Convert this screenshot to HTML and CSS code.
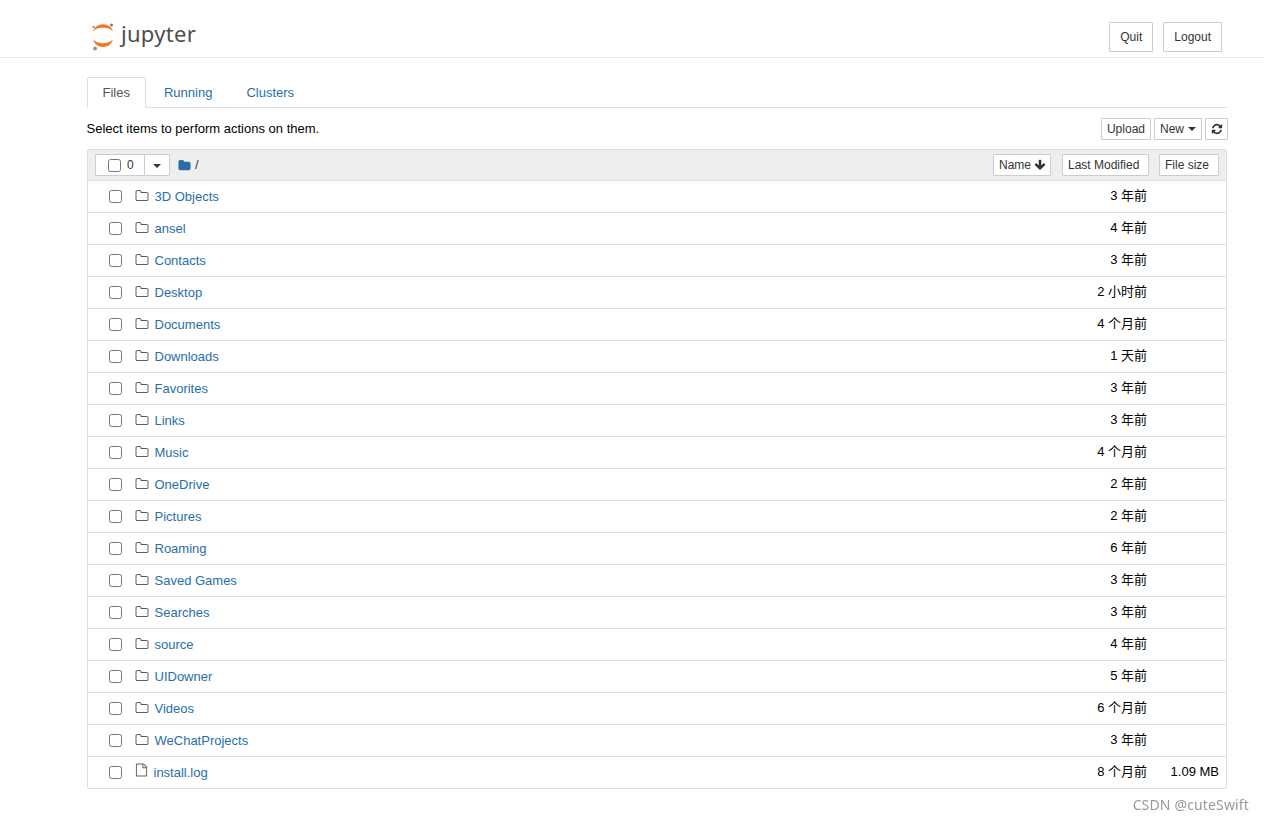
FILE: index.html
```
<!DOCTYPE html>
<html lang="en">
<head>
  <meta charset="UTF-8" />
  <meta name="viewport" content="width=device-width, initial-scale=1" />
  <title>Home Page - Select or create a notebook</title>
  <link rel="stylesheet" href="styles.css">
</head>
<body>
  <!-- icon set -->
  <svg class="sprite" aria-hidden="true">
    <symbol id="folder-o" viewBox="0 0 1792 1792"><path d="M1600 1312v-704q0-40-28-68t-68-28h-704q-40 0-68-28t-28-68v-64q0-40-28-68t-68-28h-320q-40 0-68 28t-28 68v960q0 40 28 68t68 28h1216q40 0 68-28t28-68zm128-704v704q0 92-66 158t-158 66h-1216q-92 0-158-66t-66-158v-960q0-92 66-158t158-66h320q92 0 158 66t66 158v32h672q92 0 158 66t66 158z"/></symbol>
    <symbol id="folder" viewBox="0 0 1792 1792"><path d="M1728 608v704q0 92-66 158t-158 66h-1216q-92 0-158-66t-66-158v-960q0-92 66-158t158-66h320q92 0 158 66t66 158v32h672q92 0 158 66t66 158z"/></symbol>
    <symbol id="file-o" viewBox="0 0 1792 1792"><path d="M1596 380q28 28 48 76t20 88v1152q0 40-28 68t-68 28h-1344q-40 0-68-28t-28-68v-1600q0-40 28-68t68-28h896q40 0 88 20t76 48zm-444-244v376h376q-10-29-22-41l-313-313q-12-12-41-22zm384 1528v-1024h-416q-40 0-68-28t-28-68v-416h-768v1536h1280z"/></symbol>
    <symbol id="arrow-down" viewBox="0 0 1792 1792"><path d="M1675 832q0 53-37 90l-651 652q-39 37-91 37-53 0-90-37l-651-652q-38-36-38-90 0-53 38-91l74-75q39-37 91-37 53 0 90 37l294 294v-704q0-52 38-90t90-38h128q52 0 90 38t38 90v704l294-294q37-37 90-37 52 0 91 37l75 75q37 39 37 91z"/></symbol>
    <symbol id="refresh" viewBox="0 0 1792 1792"><path d="M1639 1056q0 5-1 7-64 268-268 434.500t-478 166.500q-146 0-282.500-55t-243.500-157l-129 129q-19 19-45 19t-45-19-19-45v-448q0-26 19-45t45-19h448q26 0 45 19t19 45-19 45l-137 137q71 66 161 102t187 36q134 0 250-65t186-179q11-17 53-117 8-23 30-23h192q13 0 22.500 9.500t9.500 22.500zm25-800v448q0 26-19 45t-45 19h-448q-26 0-45-19t-19-45 19-45l138-138q-148-137-349-137-134 0-250 65t-186 179q-11 17-53 117-8 23-30 23h-199q-13 0-22.500-9.500t-9.500-22.500v-7q65-268 270-434.500t480-166.500q146 0 284 55.500t245 156.500l130-129q19-19 45-19t45 19 19 45z"/></symbol>
  </svg>

  <header class="header">
    <a class="logo" href="#">
      <svg class="logo-mark" width="24" height="30" viewBox="0 0 24 30">
        <path d="M1.900 9.200Q4.500 2.200 12 2.200T22.100 9.200Q18.200 5.800 12 5.800T1.900 9.200z" fill="#f37726"/>
        <path d="M1.900 17.600Q5.800 21.200 12 21.200T22.100 17.600Q19.500 25 12 25T1.900 17.600z" fill="#f37726"/>
        <circle cx="20.500" cy="3" r="1.500" fill="#767677"/>
        <circle cx="2.600" cy="5" r="1.100" fill="#767677"/>
        <circle cx="4" cy="26.500" r="2" fill="#989798"/>
      </svg>
      <span class="logo-text">jupyter</span>
    </a>
    <div class="header-buttons">
      <button class="btn">Quit</button>
      <button class="btn">Logout</button>
    </div>
  </header>

  <main class="container">
    <nav class="tabs">
      <a class="tab active" href="#">Files</a>
      <a class="tab" href="#">Running</a>
      <a class="tab" href="#">Clusters</a>
    </nav>

    <div class="toolbar">
      <span>Select items to perform actions on them.</span>
      <div class="toolbar-buttons">
        <button class="btn btn-xs">Upload</button>
        <button class="btn btn-xs">New <i class="caret"></i></button>
        <button class="btn btn-xs btn-refresh" title="Refresh"><svg class="icon"><use href="#refresh"/></svg></button>
      </div>
    </div>

    <div class="list">
      <div class="list-header">
        <div class="select-group">
          <label class="btn select-all"><input type="checkbox"><span>0</span></label>
          <button class="btn select-menu"><i class="caret"></i></button>
        </div>
        <div class="breadcrumb"><a href="#"><svg class="icon"><use href="#folder"/></svg></a><span>/</span></div>
        <button class="btn btn-xs sort-name">Name <svg class="icon"><use href="#arrow-down"/></svg></button>
        <button class="btn btn-xs sort-modified">Last Modified</button>
        <button class="btn btn-xs sort-size">File size</button>
      </div>
      <div class="row"><input type="checkbox"><svg class="icon"><use href="#folder-o"/></svg><a href="#">3D Objects</a><span class="modified">3 年前</span><span class="size"></span></div>
      <div class="row"><input type="checkbox"><svg class="icon"><use href="#folder-o"/></svg><a href="#">ansel</a><span class="modified">4 年前</span><span class="size"></span></div>
      <div class="row"><input type="checkbox"><svg class="icon"><use href="#folder-o"/></svg><a href="#">Contacts</a><span class="modified">3 年前</span><span class="size"></span></div>
      <div class="row"><input type="checkbox"><svg class="icon"><use href="#folder-o"/></svg><a href="#">Desktop</a><span class="modified">2 小时前</span><span class="size"></span></div>
      <div class="row"><input type="checkbox"><svg class="icon"><use href="#folder-o"/></svg><a href="#">Documents</a><span class="modified">4 个月前</span><span class="size"></span></div>
      <div class="row"><input type="checkbox"><svg class="icon"><use href="#folder-o"/></svg><a href="#">Downloads</a><span class="modified">1 天前</span><span class="size"></span></div>
      <div class="row"><input type="checkbox"><svg class="icon"><use href="#folder-o"/></svg><a href="#">Favorites</a><span class="modified">3 年前</span><span class="size"></span></div>
      <div class="row"><input type="checkbox"><svg class="icon"><use href="#folder-o"/></svg><a href="#">Links</a><span class="modified">3 年前</span><span class="size"></span></div>
      <div class="row"><input type="checkbox"><svg class="icon"><use href="#folder-o"/></svg><a href="#">Music</a><span class="modified">4 个月前</span><span class="size"></span></div>
      <div class="row"><input type="checkbox"><svg class="icon"><use href="#folder-o"/></svg><a href="#">OneDrive</a><span class="modified">2 年前</span><span class="size"></span></div>
      <div class="row"><input type="checkbox"><svg class="icon"><use href="#folder-o"/></svg><a href="#">Pictures</a><span class="modified">2 年前</span><span class="size"></span></div>
      <div class="row"><input type="checkbox"><svg class="icon"><use href="#folder-o"/></svg><a href="#">Roaming</a><span class="modified">6 年前</span><span class="size"></span></div>
      <div class="row"><input type="checkbox"><svg class="icon"><use href="#folder-o"/></svg><a href="#">Saved Games</a><span class="modified">3 年前</span><span class="size"></span></div>
      <div class="row"><input type="checkbox"><svg class="icon"><use href="#folder-o"/></svg><a href="#">Searches</a><span class="modified">3 年前</span><span class="size"></span></div>
      <div class="row"><input type="checkbox"><svg class="icon"><use href="#folder-o"/></svg><a href="#">source</a><span class="modified">4 年前</span><span class="size"></span></div>
      <div class="row"><input type="checkbox"><svg class="icon"><use href="#folder-o"/></svg><a href="#">UIDowner</a><span class="modified">5 年前</span><span class="size"></span></div>
      <div class="row"><input type="checkbox"><svg class="icon"><use href="#folder-o"/></svg><a href="#">Videos</a><span class="modified">6 个月前</span><span class="size"></span></div>
      <div class="row"><input type="checkbox"><svg class="icon"><use href="#folder-o"/></svg><a href="#">WeChatProjects</a><span class="modified">3 年前</span><span class="size"></span></div>
      <div class="row file"><input type="checkbox"><svg class="icon"><use href="#file-o"/></svg><a href="#">install.log</a><span class="modified">8 个月前</span><span class="size">1.09 MB</span></div>
    </div>
  </main>

  <div class="watermark">CSDN @cuteSwift</div>
</body>
</html>
```
FILE: styles.css
```
* {
  box-sizing: border-box;
}
body {
  margin: 0;
  height: 820px;
  overflow: hidden;
  background: #fff;
  color: #000;
  font-family: "Liberation Sans", "Noto Sans CJK SC", sans-serif;
  font-size: 13px;
  line-height: 20px;
}
a {
  color: #296eaa;
  text-decoration: none;
}
input[type="checkbox"] {
  width: 13px;
  height: 13px;
  margin: 0;
}
.sprite {
  display: none;
}
.icon {
  width: 14px;
  height: 14px;
  fill: currentColor;
  flex: none;
}

/* header */
.header {
  display: flex;
  justify-content: space-between;
  height: 58px;
  padding: 22px 42px 0 91px;
  border-bottom: 1px solid #e7e7e7;
}
.logo {
  display: flex;
  height: 30px;
  color: #4e4e4e;
}
.logo-text {
  margin-left: 6px;
  font-family: "Noto Sans", sans-serif;
  font-size: 22px;
  line-height: 23px;
  letter-spacing: 0.3px;
}
.header-buttons {
  display: flex;
  gap: 10px;
}
.btn {
  height: 30px;
  padding: 0 10px;
  border: 1px solid #ccc;
  border-radius: 1px;
  background: #fff;
  color: #333;
  font-family: inherit;
  font-size: 12px;
  line-height: 18px;
  white-space: nowrap;
}
.btn-xs {
  display: flex;
  align-items: center;
  height: 22px;
  padding: 0 5px;
}
.caret {
  display: inline-block;
  border-top: 4px solid #333;
  border-left: 4px solid transparent;
  border-right: 4px solid transparent;
}
.btn-xs .caret {
  margin: 1px 0 0 4px;
}

/* tabs */
.container {
  width: 1140px;
  margin: 19px 0 0 87px;
}
.tabs {
  display: flex;
  gap: 2px;
  height: 31px;
  border-bottom: 1px solid #ddd;
}
.tab {
  height: 31px;
  padding: 5px 15.5px 5px 14.5px;
  border: 1px solid transparent;
}
.tab.active {
  border-color: #ddd;
  border-bottom-color: #fff;
  border-radius: 2px 2px 0 0;
  background: #fff;
  color: #555;
}

/* file list */
.toolbar {
  display: flex;
  align-items: center;
  justify-content: space-between;
  height: 41px;
}
.toolbar > span {
  margin-left: -0.5px;
}
.toolbar-buttons {
  display: flex;
  gap: 3px;
  margin-right: -1px;
}
.btn-refresh {
  justify-content: center;
  width: 23px;
  padding: 0;
}
.btn-refresh .icon {
  width: 12px;
  height: 12px;
}
.list {
  border: 1px solid #ddd;
  border-radius: 2px;
}
.list-header {
  display: flex;
  align-items: center;
  height: 30px;
  padding: 0 7px;
  background: #eee;
}
.select-group {
  display: flex;
}
.select-group .btn {
  height: 22px;
}
.select-all {
  display: flex;
  align-items: center;
  gap: 6px;
  width: 50px;
  padding: 0 0 0 12px;
}
.select-menu {
  width: 26px;
  margin-left: -1px;
  padding: 0;
}
.select-menu .caret {
  vertical-align: middle;
}
.breadcrumb {
  display: flex;
  align-items: center;
  gap: 4px;
  margin-left: 8px;
  color: #333;
}
.breadcrumb a {
  display: flex;
}
.breadcrumb .icon {
  width: 13px;
  height: 13px;
}
.sort-name {
  width: 58px;
  margin-left: auto;
}
.sort-name .icon {
  width: 12px;
  height: 12px;
  margin-left: 3px;
}
.sort-modified {
  width: 87px;
  margin-left: 11px;
}
.sort-size {
  width: 60px;
  margin-left: 10px;
}
.row {
  display: flex;
  align-items: center;
  height: 32px;
  padding: 0 7px 0 21px;
  border-top: 1px solid #ddd;
}
.row .icon {
  margin: -1px 5.5px 0 13px;
  color: #5e5e5e;
}
.row.file .icon {
  width: 13px;
  margin: -5px 5.5px 0 13px;
}
.modified {
  margin: -2px 0.5px 0 auto;
}
.size {
  width: 71.5px;
  margin-top: -2px;
  text-align: right;
}

/* sits over the page corner */
.watermark {
  position: fixed;
  right: 15px;
  bottom: 5px;
  color: #999;
  font-family: "Noto Sans", sans-serif;
  font-size: 14px;
  letter-spacing: 0.15px;
}
```
